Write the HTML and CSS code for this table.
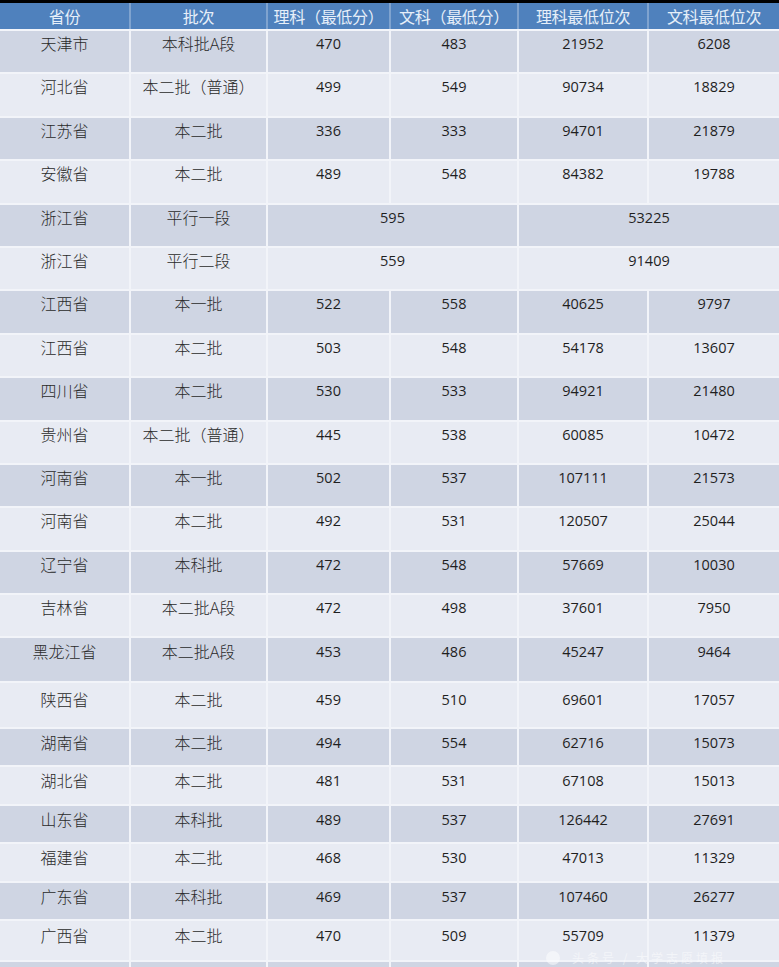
FILE: index.html
```html
<!DOCTYPE html>
<html lang="zh">
<head>
<meta charset="utf-8">
<title>分数线</title>
<link rel="stylesheet" href="styles.css">
</head>
<body>
<div class="topbar"></div>
<table class="scores">
  <colgroup>
    <col class="c1"><col class="c2"><col class="c3"><col class="c4"><col class="c5"><col class="c6">
  </colgroup>
  <thead>
    <tr><th>省份</th><th>批次</th><th>理科（最低分）</th><th>文科（最低分）</th><th>理科最低位次</th><th>文科最低位次</th></tr>
  </thead>
  <tbody>
    <tr class="d"><td class="zh">天津市</td><td class="zh">本科批A段</td><td>470</td><td>483</td><td>21952</td><td>6208</td></tr>
    <tr class="l"><td class="zh">河北省</td><td class="zh">本二批（普通）</td><td>499</td><td>549</td><td>90734</td><td>18829</td></tr>
    <tr class="d"><td class="zh">江苏省</td><td class="zh">本二批</td><td>336</td><td>333</td><td>94701</td><td>21879</td></tr>
    <tr class="l"><td class="zh">安徽省</td><td class="zh">本二批</td><td>489</td><td>548</td><td>84382</td><td>19788</td></tr>
    <tr class="d"><td class="zh">浙江省</td><td class="zh">平行一段</td><td colspan="2">595</td><td colspan="2">53225</td></tr>
    <tr class="l"><td class="zh">浙江省</td><td class="zh">平行二段</td><td colspan="2">559</td><td colspan="2">91409</td></tr>
    <tr class="d"><td class="zh">江西省</td><td class="zh">本一批</td><td>522</td><td>558</td><td>40625</td><td>9797</td></tr>
    <tr class="l"><td class="zh">江西省</td><td class="zh">本二批</td><td>503</td><td>548</td><td>54178</td><td>13607</td></tr>
    <tr class="d"><td class="zh">四川省</td><td class="zh">本二批</td><td>530</td><td>533</td><td>94921</td><td>21480</td></tr>
    <tr class="l"><td class="zh">贵州省</td><td class="zh">本二批（普通）</td><td>445</td><td>538</td><td>60085</td><td>10472</td></tr>
    <tr class="d"><td class="zh">河南省</td><td class="zh">本一批</td><td>502</td><td>537</td><td>107111</td><td>21573</td></tr>
    <tr class="l"><td class="zh">河南省</td><td class="zh">本二批</td><td>492</td><td>531</td><td>120507</td><td>25044</td></tr>
    <tr class="d"><td class="zh">辽宁省</td><td class="zh">本科批</td><td>472</td><td>548</td><td>57669</td><td>10030</td></tr>
    <tr class="l"><td class="zh">吉林省</td><td class="zh">本二批A段</td><td>472</td><td>498</td><td>37601</td><td>7950</td></tr>
    <tr class="d h44"><td class="zh">黑龙江省</td><td class="zh">本二批A段</td><td>453</td><td>486</td><td>45247</td><td>9464</td></tr>
    <tr class="l h46"><td class="zh">陕西省</td><td class="zh">本二批</td><td>459</td><td>510</td><td>69601</td><td>17057</td></tr>
    <tr class="d h38"><td class="zh">湖南省</td><td class="zh">本二批</td><td>494</td><td>554</td><td>62716</td><td>15073</td></tr>
    <tr class="l h39"><td class="zh">湖北省</td><td class="zh">本二批</td><td>481</td><td>531</td><td>67108</td><td>15013</td></tr>
    <tr class="d h38"><td class="zh">山东省</td><td class="zh">本科批</td><td>489</td><td>537</td><td>126442</td><td>27691</td></tr>
    <tr class="l h39"><td class="zh">福建省</td><td class="zh">本二批</td><td>468</td><td>530</td><td>47013</td><td>11329</td></tr>
    <tr class="d h38"><td class="zh">广东省</td><td class="zh">本科批</td><td>469</td><td>537</td><td>107460</td><td>26277</td></tr>
    <tr class="l h41"><td class="zh">广西省</td><td class="zh">本二批</td><td>470</td><td>509</td><td>55709</td><td>11379</td></tr>
    <tr class="d"><td></td><td></td><td></td><td></td><td></td><td></td></tr>
  </tbody>
</table>
<div class="watermark"><span class="wm-dot"></span><span class="wm-text">头条号 / 大学志愿填报</span></div>
</body>
</html>
```

FILE: styles.css
```css
html, body {
  margin: 0;
  padding: 0;
  background: #e8ecf4;
  overflow: hidden;
}
body {
  width: 779px;
  height: 967px;
  position: relative;
  font-family: "Open Sans", "Noto Sans CJK SC", sans-serif;
}
.topbar {
  height: 3px;
  background: #000;
}
.scores {
  width: 779px;
  border-collapse: collapse;
  table-layout: fixed;
}
.c1 { width: 130px; }
.c2 { width: 137px; }
.c3 { width: 123px; }
.c4 { width: 128px; }
.c5 { width: 130px; }
.c6 { width: 131px; }

.scores th {
  background: #4f81bd;
  color: #e6eff9;
  font-family: "Noto Sans CJK SC", sans-serif;
  font-weight: 400;
  font-size: 16px;
  line-height: 20px;
  height: 26px;
  padding: 0;
  text-align: center;
  vertical-align: middle;
  border-left: 2px solid #7fa3cf;
  border-right: 2px solid #7fa3cf;
  border-bottom: 2px solid #f3f5fa;
  white-space: nowrap;
  letter-spacing: -0.3px;
}
.scores th:first-child { border-left: none; }
.scores th:last-child { border-right: none; }

.scores td {
  height: 43.4px;
  box-sizing: border-box;
  padding: 3px 0 0;
  text-align: center;
  vertical-align: top;
  font-size: 14.5px;
  line-height: 20px;
  color: #1f1f1f;
  border: 2px solid #f2f4f9;
  white-space: nowrap;
}
.scores td:first-child { border-left: none; }
.scores td:last-child { border-right: none; }
.scores td.zh {
  font-size: 16px;
  color: #2a2a2a;
  font-weight: 300;
}
.scores tr.d td { background: #cfd5e3; }
.scores tr.l td { background: #e8ebf3; }

.scores tr.h44 td { height: 44.5px; padding-top: 4px; }
.scores tr.h46 td { height: 46px; padding-top: 7px; }
.scores tr.h38 td { height: 38px; padding-top: 4px; }
.scores tr.h39 td { height: 39px; padding-top: 4px; }
.scores tr.h41 td { height: 41px; padding-top: 5px; }

.watermark {
  position: absolute;
  left: 546px;
  top: 951px;
  display: flex;
  align-items: center;
  gap: 12px;
  opacity: 0.5;
}
.wm-dot {
  width: 14px;
  height: 14px;
  border-radius: 50%;
  background: #ffffff;
}
.wm-text {
  font-family: "Noto Sans CJK SC", sans-serif;
  font-size: 12px;
  line-height: 14px;
  color: #ffffff;
  letter-spacing: 3px;
}
```
